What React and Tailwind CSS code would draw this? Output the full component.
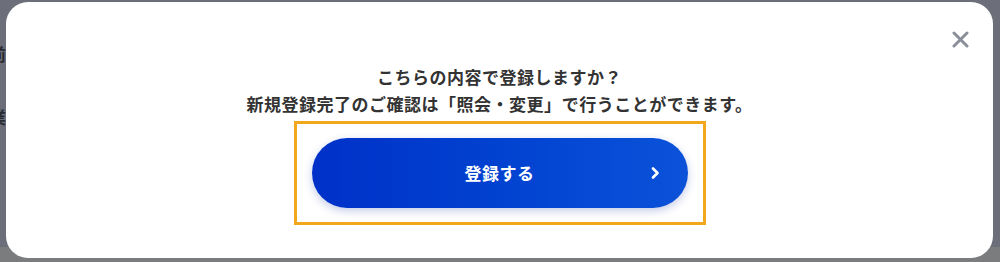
export default function App() {
  const jp = { fontFamily: '"Noto Sans CJK JP", "Noto Sans", sans-serif' };
  return (
    <div className="relative w-[1000px] h-[262px] overflow-hidden bg-[#6c6f79]" style={jp}>
      {/* background page fragments under the overlay */}
      <div className="absolute left-0 top-[247px] w-full h-[15px] bg-[#7b7c7e]" />
      <span className="absolute left-[-11px] top-[41px] text-[17px] font-bold text-[#2a2b30]">前</span>
      <span className="absolute left-[-11px] top-[104px] text-[17px] font-bold text-[#2a2b30]">業</span>

      <div className="relative ml-[6px] mt-[2px] w-[987px] h-[256px] rounded-[22px] bg-white flex flex-col items-center">
        <button className="absolute right-[24px] top-[28px] w-[18px] h-[18px] flex items-center justify-center">
          <svg width="17" height="17" viewBox="0 0 17 17">
            <path d="M2 2 L15 15 M15 2 L2 15" stroke="#8a8f9a" strokeWidth="3" strokeLinecap="round" />
          </svg>
        </button>

        <div className="mt-[61px] text-center text-[17px] leading-[27px] font-bold text-[#333333] tracking-[0.03em]">
          <p>こちらの内容で登録しますか？</p>
          <p>新規登録完了のご確認は「照会・変更」で行うことができます。</p>
        </div>

        <div className="mt-[4px] w-[412px] h-[104px] border-[3px] border-[#f2a81d] flex items-center justify-center">
          <div className="relative w-[376px] h-[70px] rounded-full bg-gradient-to-r from-[#0030c8] to-[#0b52d9] shadow-[0_3px_8px_rgba(20,50,160,0.25)] flex items-center justify-center">
            <span className="text-white text-[17px] font-bold tracking-[0.03em]">登録する</span>
            <svg className="absolute right-[27px] top-1/2 -translate-y-1/2" width="12" height="14" viewBox="0 0 12 14">
              <path d="M4 2.5 L8.5 7 L4 11.5" stroke="white" strokeWidth="2.6" fill="none" strokeLinecap="round" strokeLinejoin="round" />
            </svg>
          </div>
        </div>
      </div>
    </div>
  );
}
